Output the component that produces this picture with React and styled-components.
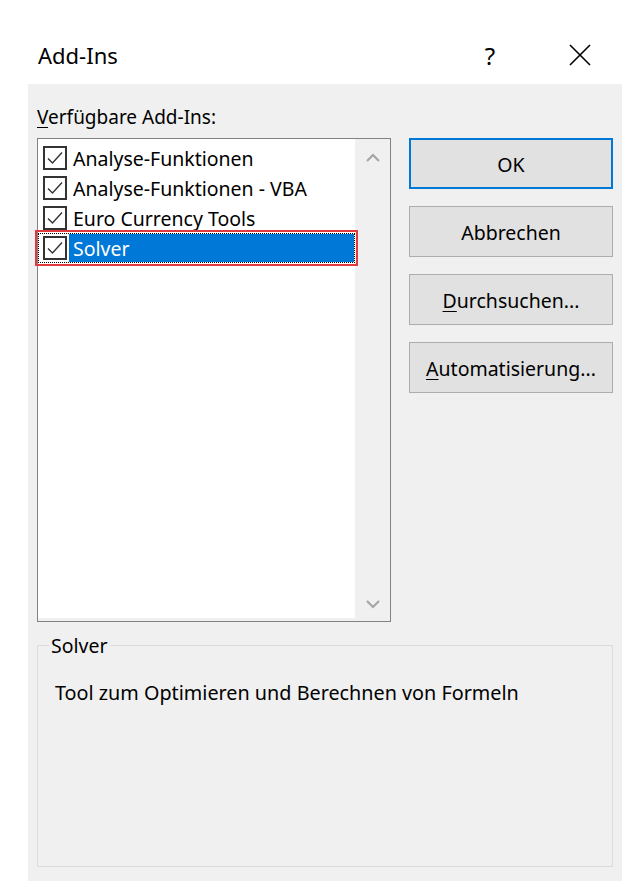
import React from "react";
import styled, { createGlobalStyle } from "styled-components";

const GlobalStyle = createGlobalStyle`
  html, body {
    margin: 0;
    padding: 0;
    background: #ffffff;
  }
  body {
    font-family: "Noto Sans", "Open Sans", sans-serif;
    color: #000;
  }
`;

const Window = styled.div`
  width: 627px;
  height: 890px;
  background: #fff;
`;

const TitleBar = styled.div`
  height: 84px;
  display: flex;
  align-items: center;
  padding: 26px 36px 0 38px;
  box-sizing: border-box;
`;

const Title = styled.div`
  flex: 1;
  font-size: 22px;
`;

const Help = styled.div`
  font-size: 24px;
  width: 22px;
  margin-right: 68px;
  text-align: center;
`;

const Close = styled.svg`
  width: 22px;
  height: 22px;
`;

const Body = styled.div`
  margin-left: 28px;
  width: 594px;
  height: 797px;
  background: #f0f0f0;
  padding: 17px 9px 0 9px;
  box-sizing: border-box;
`;

const Label = styled.div`
  font-size: 19px;
  height: 37px;
  line-height: 32px;
`;

const Key = styled.span`
  text-decoration: underline;
  text-underline-offset: 3px;
`;

const MainRow = styled.div`
  display: flex;
  gap: 18px;
`;

const ListBox = styled.div`
  width: 354px;
  height: 484px;
  border: 1px solid #828282;
  box-sizing: border-box;
  display: flex;
`;

const ListItems = styled.div`
  flex: 1;
  background: #fff;
  padding-top: 4px;
  margin-bottom: 3px;
`;

const Item = styled.div`
  height: 30px;
  display: flex;
  align-items: center;
  padding-left: 4px;
  box-sizing: border-box;
  border: 1px dotted ${(p) => (p.selected ? "#000" : "transparent")};
  outline: ${(p) => (p.selected ? "2px solid #e0393e" : "none")};
  outline-offset: 1px;
`;

const Check = styled.svg`
  width: 24px;
  height: 24px;
  flex: none;
`;

const ItemText = styled.div`
  flex: 1;
  height: 28px;
  display: flex;
  align-items: center;
  margin-left: 2px;
  padding-left: 4px;
  font-size: 19.5px;
  background: ${(p) => (p.selected ? "#0078d7" : "transparent")};
  color: ${(p) => (p.selected ? "#fff" : "#000")};
`;

const ScrollBar = styled.div`
  width: 35px;
  display: flex;
  flex-direction: column;
  justify-content: space-between;
  align-items: center;
  padding: 14px 0 12px;
  box-sizing: border-box;
`;

const Arrow = styled.svg`
  width: 14px;
  height: 10px;
`;

const Buttons = styled.div`
  display: flex;
  flex-direction: column;
  gap: 17px;
`;

const Button = styled.div`
  width: 204px;
  height: 51px;
  box-sizing: border-box;
  background: #e1e1e1;
  border: ${(p) => (p.primary ? "2px solid #0078d7" : "1px solid #adadad")};
  display: flex;
  align-items: center;
  justify-content: center;
  font-size: 19.5px;
  padding-top: 2px;
`;

const Group = styled.fieldset`
  margin: 10px 0 0 0;
  width: 576px;
  height: 235px;
  box-sizing: border-box;
  border: 1px solid #dcdcdc;
  padding: 20px 17px 0 17px;
`;

const Legend = styled.legend`
  font-size: 19.5px;
  padding: 0 2px;
  margin-left: -6px;
`;

const Description = styled.div`
  font-size: 19.8px;
`;

const CheckIcon = () => (
  <Check viewBox="0 0 24 24">
    <rect x="1" y="1" width="22" height="22" fill="#fff" stroke="#333" strokeWidth="2" />
    <path d="M5 12.5 L9.5 17 L19 6.5" fill="none" stroke="#333" strokeWidth="1.4" />
  </Check>
);

const items = [
  "Analyse-Funktionen",
  "Analyse-Funktionen - VBA",
  "Euro Currency Tools",
  "Solver",
];

export default function App() {
  return (
    <Window>
      <GlobalStyle />
      <TitleBar>
        <Title>Add-Ins</Title>
        <Help>?</Help>
        <Close viewBox="0 0 22 22">
          <path d="M1 1 L21 21 M21 1 L1 21" stroke="#000" strokeWidth="1.6" />
        </Close>
      </TitleBar>
      <Body>
        <Label>
          <Key>V</Key>erfügbare Add-Ins:
        </Label>
        <MainRow>
          <ListBox>
            <ListItems>
              {items.map((name, i) => (
                <Item key={name} selected={i === 3}>
                  <CheckIcon />
                  <ItemText selected={i === 3}>{name}</ItemText>
                </Item>
              ))}
            </ListItems>
            <ScrollBar>
              <Arrow viewBox="0 0 14 10">
                <path d="M1 8 L7 2 L13 8" fill="none" stroke="#a6a6a6" strokeWidth="2.2" />
              </Arrow>
              <Arrow viewBox="0 0 14 10">
                <path d="M1 2 L7 8 L13 2" fill="none" stroke="#a6a6a6" strokeWidth="2.2" />
              </Arrow>
            </ScrollBar>
          </ListBox>
          <Buttons>
            <Button primary>OK</Button>
            <Button>Abbrechen</Button>
            <Button>
              <Key>D</Key>urchsuchen...
            </Button>
            <Button>
              <Key>A</Key>utomatisierung...
            </Button>
          </Buttons>
        </MainRow>
        <Group>
          <Legend>Solver</Legend>
          <Description>Tool zum Optimieren und Berechnen von Formeln</Description>
        </Group>
      </Body>
    </Window>
  );
}
